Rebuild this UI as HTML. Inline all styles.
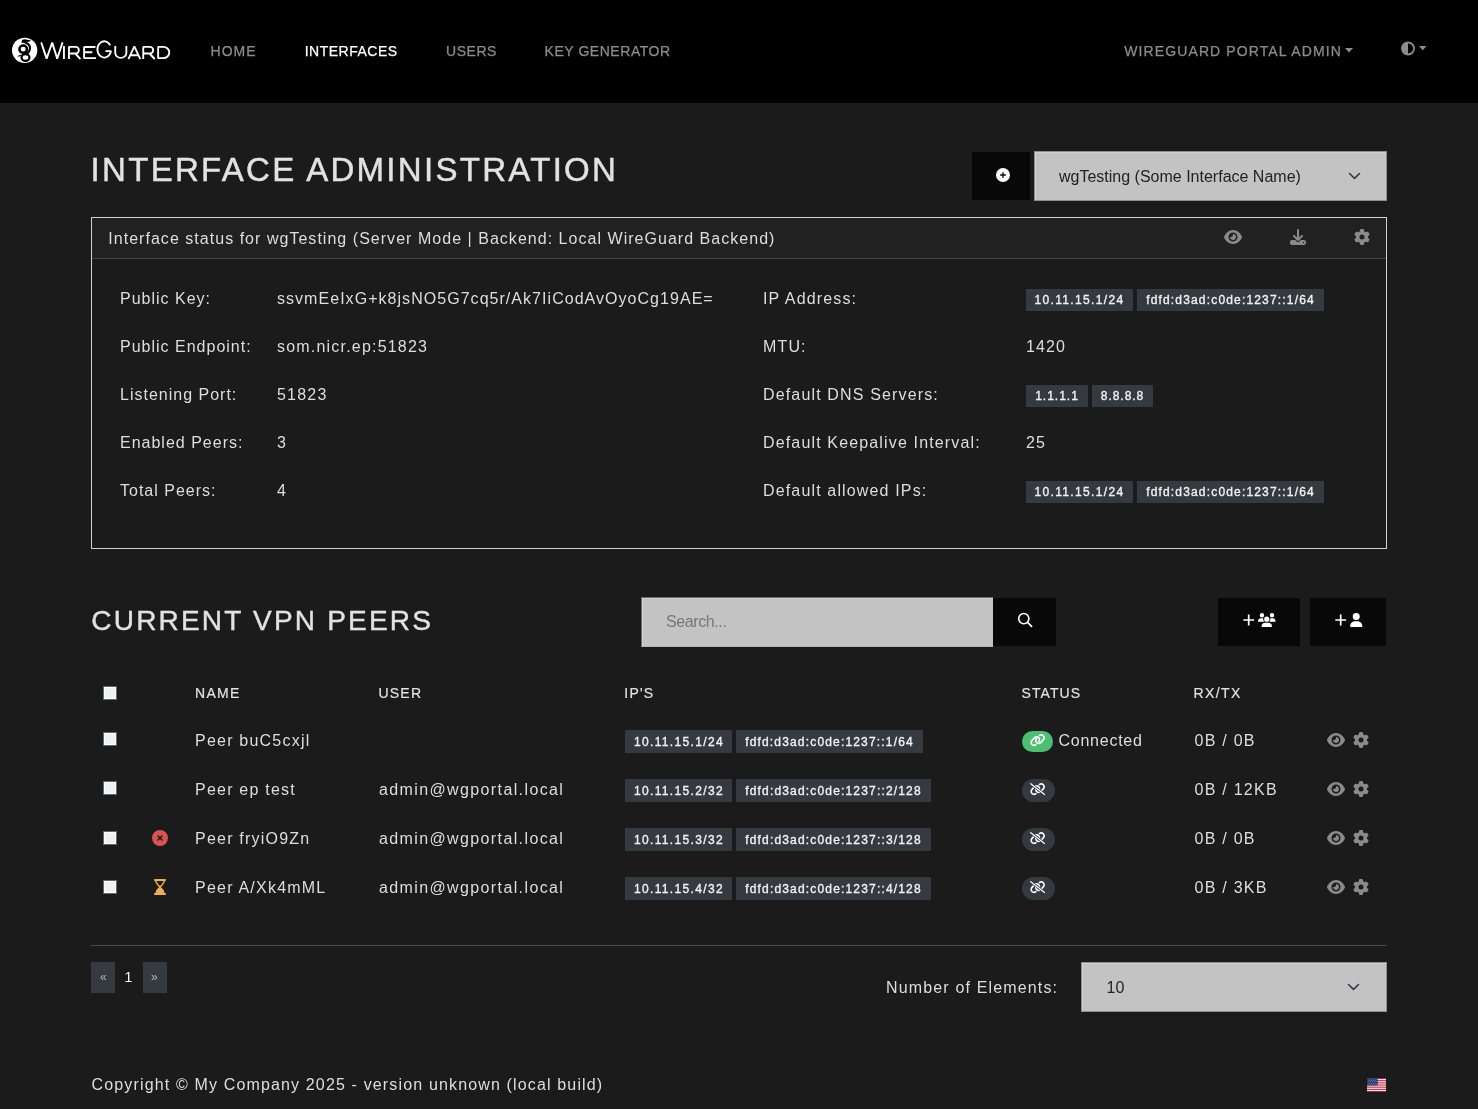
<!DOCTYPE html>
<html><head><meta charset="utf-8"><title>WireGuard Portal</title>
<style>
*{box-sizing:border-box;margin:0;padding:0}
html,body{width:1478px;height:1109px;overflow:hidden}
body{will-change:transform}
body{background:#1b1b1b;color:#dedede;font-family:"Liberation Sans",sans-serif;position:relative}
.t{position:absolute;white-space:nowrap}
.b{position:absolute;display:block}
.bd{position:absolute;background:#343a40;color:#f2f2f2;font-weight:normal;-webkit-text-stroke:0.35px #f2f2f2;text-align:center;white-space:nowrap;font-family:"Liberation Sans",sans-serif}
</style></head><body>
<div class="b" style="left:0px;top:0px;width:1478px;height:103px;background:#000;"></div>
<svg class="b" style="left:0;top:0" width="180" height="80" viewBox="0 0 180 80">
<ellipse cx="24.65" cy="50.35" rx="12.65" ry="12.7" fill="#fff"/>
<ellipse cx="23.2" cy="49.2" rx="3.8" ry="3.6" fill="none" stroke="#000" stroke-width="2.5"/>
<ellipse cx="25.5" cy="57.5" rx="3.95" ry="3.35" fill="none" stroke="#000" stroke-width="2.2"/>
<path d="M25.0 42.2 C28.5 43.6 30.6 46.5 29.9 49.6 C29.4 52.0 28.0 53.2 26.3 54.0" fill="none" stroke="#000" stroke-width="2.1"/>
<path d="M21.3 42.4 L22.2 39.8 L25.2 39.2 L28.0 39.9 L30.9 40.3 L29.6 41.5 L26.8 42.1 L25.4 43.3 Z" fill="#000"/>
<path d="M17.0 56.4 L20.3 54.7 L21.6 55.9 L19.0 56.4 Z" fill="#000"/>
<g fill="none" stroke="#fff" stroke-width="1.85" stroke-linejoin="bevel">
<path d="M41.2 42.4 L46.6 58.6 L52.2 42.6 L57.2 58.6 L62.6 42.4"/>
<path d="M63.95 46.1 V59"/>
<path d="M68.95 59 V46.9 H75.6 A3.25 3.3 0 0 1 75.6 53.5 H68.95 M75.2 53.5 L80.4 59"/>
<path d="M95.4 47.0 H84.1 V58.15 H96 M84.1 52.25 H92.3"/>
<path d="M110.2 45.4 A6.85 8.1 0 1 0 110.95 51.1 H105.4"/>
<path d="M115.25 45.9 V53.4 A5.6 5.1 0 0 0 126.35 53.4 V45.9"/>
<path d="M128.4 59.2 L134.35 46.3 L140.3 59.2 M130.6 55.2 H138.1"/>
<path d="M143.25 59 V46.9 H149.9 A3.25 3.3 0 0 1 149.9 53.5 H143.25 M149.5 53.5 L154.7 59"/>
<path d="M158.15 46.85 H163.2 A6.1 5.65 0 0 1 163.2 58.15 H158.15 Z"/>
</g>
</svg>
<div class="t" style="left:210.6px;top:42.45px;font-size:14px;line-height:18px;letter-spacing:1.0px;color:#8d8d8d;font-weight:400;-webkit-text-stroke:0.25px #8d8d8d">HOME</div>
<div class="t" style="left:304.7px;top:42.45px;font-size:14px;line-height:18px;letter-spacing:0.5px;color:#ffffff;font-weight:400;-webkit-text-stroke:0.25px #ffffff">INTERFACES</div>
<div class="t" style="left:446.1px;top:42.45px;font-size:14px;line-height:18px;letter-spacing:0.5px;color:#8d8d8d;font-weight:400;-webkit-text-stroke:0.25px #8d8d8d">USERS</div>
<div class="t" style="left:544.6px;top:42.45px;font-size:14px;line-height:18px;letter-spacing:0.54px;color:#8d8d8d;font-weight:400;-webkit-text-stroke:0.25px #8d8d8d">KEY GENERATOR</div>
<div class="t" style="left:1124.3px;top:42.45px;font-size:14px;line-height:18px;letter-spacing:1.1px;color:#8d8d8d;font-weight:400;-webkit-text-stroke:0.25px #8d8d8d">WIREGUARD PORTAL ADMIN</div>
<svg class="b" style="left:1345px;top:48px" width="8" height="5" viewBox="0 0 8 5"><path d="M0 0H8L4 4.5Z" fill="#8d8d8d"/></svg>
<svg class="b" style="left:1400px;top:40.5px" width="16" height="15" viewBox="0 0 16 15">
<circle cx="8" cy="7.5" r="6" fill="none" stroke="#8d8d8d" stroke-width="1.8"/>
<path d="M8 1.5 A6 6 0 0 0 8 13.5 Z" fill="#8d8d8d"/></svg>
<svg class="b" style="left:1419px;top:46px" width="8" height="5" viewBox="0 0 8 5"><path d="M0 0H7.5L3.75 4.2Z" fill="#8d8d8d"/></svg>
<div class="t" style="left:90.6px;top:148.57px;font-size:33px;line-height:41px;letter-spacing:2.3px;color:#e2e2e2;font-weight:400;-webkit-text-stroke:0.45px #e2e2e2">INTERFACE ADMINISTRATION</div>
<div class="b" style="left:972px;top:152px;width:58px;height:48px;background:#080808;"></div>
<svg class="b" style="left:996px;top:168px" width="14" height="14" viewBox="0 0 512 512"><path fill="#fff" d="M256 512A256 256 0 1 0 256 0a256 256 0 1 0 0 512zM232 344V280H168c-13.300 0-24-10.7-24-24s10.7-24 24-24h64V168c0-13.3 10.7-24 24-24s24 10.7 24 24v64h64c13.3 0 24 10.7 24 24s-10.7 24-24 24H280v64c0 13.3-10.7 24-24 24s-24-10.7-24-24z"/></svg>
<div class="b" style="left:1034px;top:151px;width:353px;height:50px;background:#c3c3c3;border:1px solid #8e8e8e;box-shadow:inset 1px 1px 0 #d2d2d2"></div>
<div class="t" style="left:1059.0px;top:167.46px;font-size:16px;line-height:20px;letter-spacing:0px;color:#222;font-weight:400;">wgTesting (Some Interface Name)</div>
<svg class="b" style="left:1348px;top:172px" width="13" height="8" viewBox="0 0 13 8"><path d="M1.5 1.5 L6.5 6.3 L11.5 1.5" fill="none" stroke="#343a40" stroke-width="1.6" stroke-linecap="round" stroke-linejoin="round"/></svg>
<div class="b" style="left:91px;top:217px;width:1296px;height:332px;background:transparent;border:1px solid #d2d2d2"></div>
<div class="b" style="left:92px;top:218px;width:1294px;height:41px;background:#212121;border-bottom:1px solid #444"></div>
<div class="t" style="left:108.3px;top:228.66px;font-size:16px;line-height:20px;letter-spacing:1.03px;color:#dedede;font-weight:400;">Interface status for wgTesting (Server Mode | Backend: Local WireGuard Backend)</div>
<svg class="b" style="left:1224px;top:229px" width="18" height="16" viewBox="0 0 576 512"><path fill="#8a8a8a" d="M288 32c-80.8 0-145.5 36.8-192.6 80.6C48.6 156 17.3 208 2.5 243.7c-3.3 7.9-3.3 16.7 0 24.6C17.3 304 48.6 356 95.4 399.4C142.5 443.2 207.2 480 288 480s145.5-36.8 192.6-80.6c46.8-43.5 78.1-95.4 93-131.1c3.3-7.9 3.3-16.7 0-24.6c-14.9-35.7-46.2-87.7-93-131.1C433.5 68.8 368.8 32 288 32zM144 256a144 144 0 1 1 288 0 144 144 0 1 1 -288 0zm144-64c0 35.3-28.7 64-64 64c-7.1 0-13.9-1.2-20.3-3.3c-5.5-1.8-11.9 1.6-11.7 7.4c.3 6.9 1.3 13.8 3.2 20.7c13.7 51.2 66.4 81.6 117.6 67.9s81.6-66.4 67.9-117.6c-11.1-41.5-47.8-69.4-88.6-71.1c-5.8-.2-9.2 6.1-7.4 11.7c2.1 6.4 3.3 13.2 3.3 20.3z"/></svg>
<svg class="b" style="left:1290px;top:229px" width="16" height="16" viewBox="0 0 512 512"><path fill="#8a8a8a" d="M288 32c0-17.7-14.3-32-32-32s-32 14.3-32 32V274.7l-73.4-73.4c-12.5-12.5-32.8-12.5-45.3 0s-12.5 32.8 0 45.3l128 128c12.5 12.5 32.8 12.5 45.3 0l128-128c12.5-12.5 12.5-32.8 0-45.3s-32.8-12.5-45.3 0L288 274.7V32zM64 352c-35.3 0-64 28.7-64 64v32c0 35.3 28.7 64 64 64H448c35.3 0 64-28.7 64-64V416c0-35.3-28.7-64-64-64H346.5l-45.3 45.3c-25 25-65.5 25-90.5 0L165.5 352H64zm368 56a24 24 0 1 1 0 48 24 24 0 1 1 0-48z"/></svg>
<svg class="b" style="left:1354px;top:229px" width="16" height="16" viewBox="0 0 512 512"><path fill="#8a8a8a" d="M495.9 166.6c3.2 8.7 .5 18.4-6.4 24.6l-43.3 39.4c1.1 8.3 1.7 16.8 1.7 25.4s-.6 17.1-1.7 25.4l43.3 39.4c6.9 6.2 9.6 15.9 6.4 24.6c-4.4 11.9-9.7 23.3-15.8 34.3l-4.7 8.1c-6.6 11-14 21.4-22.1 31.2c-5.900 7.2-15.7 9.6-24.5 6.8l-55.7-17.7c-13.4 10.3-28.2 18.9-44 25.4l-12.5 57.1c-2 9.1-9 16.3-18.2 17.8c-13.8 2.3-28 3.5-42.5 3.5s-28.7-1.2-42.5-3.5c-9.2-1.5-16.2-8.7-18.2-17.8l-12.5-57.1c-15.8-6.5-30.6-15.1-44-25.4L83.1 425.9c-8.8 2.8-18.6 .3-24.5-6.8c-8.1-9.8-15.5-20.2-22.1-31.2l-4.7-8.1c-6.1-11-11.4-22.4-15.8-34.3c-3.2-8.7-.5-18.4 6.4-24.6l43.3-39.4C64.6 273.1 64 264.6 64 256s.6-17.1 1.7-25.4L22.4 191.2c-6.9-6.2-9.600-15.9-6.4-24.6c4.4-11.9 9.7-23.3 15.8-34.3l4.7-8.1c6.6-11 14-21.4 22.1-31.2c5.9-7.2 15.7-9.6 24.5-6.8l55.7 17.7c13.4-10.3 28.2-18.9 44-25.4l12.5-57.1c2-9.1 9-16.3 18.2-17.8C227.3 1.2 241.5 0 256 0s28.7 1.2 42.5 3.5c9.2 1.5 16.2 8.7 18.2 17.8l12.5 57.1c15.8 6.5 30.6 15.1 44 25.4l55.7-17.7c8.8-2.8 18.6-.3 24.5 6.8c8.1 9.8 15.5 20.2 22.1 31.2l4.7 8.1c6.1 11 11.4 22.4 15.8 34.3zM256 336a80 80 0 1 0 0-160 80 80 0 1 0 0 160z"/></svg>
<div class="t" style="left:120.0px;top:289.46px;font-size:16px;line-height:20px;letter-spacing:1.0px;color:#dedede;font-weight:400;">Public Key:</div>
<div class="t" style="left:277.0px;top:289.46px;font-size:16px;line-height:20px;letter-spacing:1.04px;color:#dedede;font-weight:400;">ssvmEeIxG+k8jsNO5G7cq5r/Ak7IiCodAvOyoCg19AE=</div>
<div class="t" style="left:120.0px;top:337.46px;font-size:16px;line-height:20px;letter-spacing:1.0px;color:#dedede;font-weight:400;">Public Endpoint:</div>
<div class="t" style="left:277.0px;top:337.46px;font-size:16px;line-height:20px;letter-spacing:1.2px;color:#dedede;font-weight:400;">som.nicr.ep:51823</div>
<div class="t" style="left:120.0px;top:385.46px;font-size:16px;line-height:20px;letter-spacing:1.0px;color:#dedede;font-weight:400;">Listening Port:</div>
<div class="t" style="left:277.0px;top:385.46px;font-size:16px;line-height:20px;letter-spacing:1.2px;color:#dedede;font-weight:400;">51823</div>
<div class="t" style="left:120.0px;top:433.46px;font-size:16px;line-height:20px;letter-spacing:1.0px;color:#dedede;font-weight:400;">Enabled Peers:</div>
<div class="t" style="left:277.0px;top:433.46px;font-size:16px;line-height:20px;letter-spacing:1.2px;color:#dedede;font-weight:400;">3</div>
<div class="t" style="left:120.0px;top:481.46px;font-size:16px;line-height:20px;letter-spacing:1.0px;color:#dedede;font-weight:400;">Total Peers:</div>
<div class="t" style="left:277.0px;top:481.46px;font-size:16px;line-height:20px;letter-spacing:1.2px;color:#dedede;font-weight:400;">4</div>
<div class="t" style="left:763.0px;top:289.46px;font-size:16px;line-height:20px;letter-spacing:1.15px;color:#dedede;font-weight:400;">IP Address:</div>
<div class="t" style="left:763.0px;top:337.46px;font-size:16px;line-height:20px;letter-spacing:1.15px;color:#dedede;font-weight:400;">MTU:</div>
<div class="t" style="left:763.0px;top:385.46px;font-size:16px;line-height:20px;letter-spacing:1.15px;color:#dedede;font-weight:400;">Default DNS Servers:</div>
<div class="t" style="left:763.0px;top:433.46px;font-size:16px;line-height:20px;letter-spacing:1.15px;color:#dedede;font-weight:400;">Default Keepalive Interval:</div>
<div class="t" style="left:763.0px;top:481.46px;font-size:16px;line-height:20px;letter-spacing:1.15px;color:#dedede;font-weight:400;">Default allowed IPs:</div>
<div class="t" style="left:1026.0px;top:337.46px;font-size:16px;line-height:20px;letter-spacing:1.1px;color:#dedede;font-weight:400;">1420</div>
<div class="t" style="left:1026.0px;top:433.46px;font-size:16px;line-height:20px;letter-spacing:1.1px;color:#dedede;font-weight:400;">25</div>
<div class="bd" style="left:1026px;top:289px;width:107px;height:22px;line-height:22px;text-indent:0px;font-size:12px;letter-spacing:1.35px">10.11.15.1/24</div>
<div class="bd" style="left:1137px;top:289px;width:187px;height:22px;line-height:22px;text-indent:0px;font-size:12px;letter-spacing:1.17px">fdfd:d3ad:c0de:1237::1/64</div>
<div class="bd" style="left:1026px;top:481px;width:107px;height:22px;line-height:22px;text-indent:0px;font-size:12px;letter-spacing:1.35px">10.11.15.1/24</div>
<div class="bd" style="left:1137px;top:481px;width:187px;height:22px;line-height:22px;text-indent:0px;font-size:12px;letter-spacing:1.17px">fdfd:d3ad:c0de:1237::1/64</div>
<div class="bd" style="left:1026px;top:385px;width:62px;height:22px;line-height:22px;text-indent:0px;font-size:12px;letter-spacing:1.0px">1.1.1.1</div>
<div class="bd" style="left:1092px;top:385px;width:61px;height:22px;line-height:22px;text-indent:0px;font-size:12px;letter-spacing:0.95px">8.8.8.8</div>
<div class="t" style="left:91.3px;top:603.30px;font-size:28px;line-height:35px;letter-spacing:2.2px;color:#e2e2e2;font-weight:400;-webkit-text-stroke:0.4px #e2e2e2">CURRENT VPN PEERS</div>
<div class="b" style="left:641px;top:597px;width:352px;height:50px;background:#c3c3c3;border:1px solid #6a6a6a;border-right:none;border-bottom-color:#b5b5b5;box-shadow:inset 1px 1px 0 #d2d2d2"></div>
<div class="t" style="left:666.0px;top:612.46px;font-size:16px;line-height:20px;letter-spacing:-0.4px;color:#777;font-weight:400;">Search...</div>
<div class="b" style="left:993px;top:598px;width:63px;height:48px;background:#080808;"></div>
<svg class="b" style="left:1016px;top:611px" width="18" height="18" viewBox="0 0 18 18"><circle cx="7.8" cy="7.6" r="5.1" fill="none" stroke="#fff" stroke-width="1.6"/><path d="M11.6 11.4 L15.6 15.4" stroke="#fff" stroke-width="1.7" stroke-linecap="round"/></svg>
<div class="b" style="left:1218px;top:598px;width:82px;height:48px;background:#080808;"></div>
<div class="b" style="left:1310px;top:598px;width:76px;height:48px;background:#080808;"></div>
<svg class="b" style="left:1242.5px;top:614px" width="12" height="12" viewBox="0 0 12 12"><path d="M5.7 0.5V11.5M0.3 6H11.1" stroke="#fff" stroke-width="1.7"/></svg>
<svg class="b" style="left:1334.5px;top:614px" width="12" height="12" viewBox="0 0 12 12"><path d="M5.7 0.5V11.5M0.3 6H11.1" stroke="#fff" stroke-width="1.7"/></svg>
<svg class="b" style="left:1258px;top:613px" width="17.5" height="14" viewBox="0 0 640 512"><path fill="#fff" d="M144 0a80 80 0 1 1 0 160A80 80 0 1 1 144 0zM512 0a80 80 0 1 1 0 160A80 80 0 1 1 512 0zM0 298.7C0 239.8 47.8 192 106.7 192h42.7c15.9 0 31 3.5 44.6 9.7c-1.3 7.2-1.9 14.7-1.9 22.3c0 38.2 16.8 72.5 43.3 96c-.2 0-.4 0-.7 0H21.3C9.6 320 0 310.4 0 298.7zM405.3 320c-.2 0-.4 0-.7 0c26.6-23.5 43.3-57.8 43.3-96c0-7.6-.7-15-1.9-22.3c13.6-6.3 28.7-9.7 44.6-9.7h42.7C592 192 640 239.8 640 298.7c0 11.8-9.6 21.3-21.3 21.3H405.3zM224 224a96 96 0 1 1 192 0 96 96 0 1 1 -192 0zM128 485.3C128 411.7 187.7 352 261.3 352H378.7C452.3 352 512 411.7 512 485.3c0 14.7-11.9 26.7-26.7 26.7H154.7c-14.7 0-26.7-11.9-26.7-26.7z"/></svg>
<svg class="b" style="left:1350px;top:613px" width="12.5" height="14" viewBox="0 0 448 512"><path fill="#fff" d="M224 256A128 128 0 1 0 224 0a128 128 0 1 0 0 256zm-45.7 48C79.8 304 0 383.8 0 482.3C0 498.7 13.3 512 29.7 512H418.3c16.4 0 29.7-13.3 29.7-29.7C448 383.8 368.2 304 269.7 304H178.3z"/></svg>
<div class="b" style="left:103px;top:686px;width:14px;height:14px;background:#eff0f2;border:1px solid #5f666c;box-shadow:inset 0 0 0 1px #fbfcfe"></div>
<div class="t" style="left:195.0px;top:684.45px;font-size:14px;line-height:18px;letter-spacing:1.33px;color:#e2e2e2;font-weight:400;-webkit-text-stroke:0.2px #e2e2e2">NAME</div>
<div class="t" style="left:378.5px;top:684.45px;font-size:14px;line-height:18px;letter-spacing:1.2px;color:#e2e2e2;font-weight:400;-webkit-text-stroke:0.2px #e2e2e2">USER</div>
<div class="t" style="left:624.3px;top:684.45px;font-size:14px;line-height:18px;letter-spacing:1.2px;color:#e2e2e2;font-weight:400;-webkit-text-stroke:0.2px #e2e2e2">IP'S</div>
<div class="t" style="left:1021.6px;top:684.45px;font-size:14px;line-height:18px;letter-spacing:1.08px;color:#e2e2e2;font-weight:400;-webkit-text-stroke:0.2px #e2e2e2">STATUS</div>
<div class="t" style="left:1193.4px;top:684.45px;font-size:14px;line-height:18px;letter-spacing:1.4px;color:#e2e2e2;font-weight:400;-webkit-text-stroke:0.2px #e2e2e2">RX/TX</div>
<div class="b" style="left:103px;top:732px;width:14px;height:14px;background:#eff0f2;border:1px solid #5f666c;box-shadow:inset 0 0 0 1px #fbfcfe"></div>
<div class="t" style="left:195.0px;top:731.46px;font-size:16px;line-height:20px;letter-spacing:1.22px;color:#dedede;font-weight:400;">Peer buC5cxjl</div>
<div class="bd" style="left:625px;top:730px;width:107px;height:23px;line-height:25px;text-indent:1px;font-size:12px;letter-spacing:1.35px">10.11.15.1/24</div>
<div class="bd" style="left:736px;top:730px;width:187px;height:23px;line-height:25px;text-indent:0px;font-size:12px;letter-spacing:1.17px">fdfd:d3ad:c0de:1237::1/64</div>
<div class="b" style="left:1022px;top:731px;width:31px;height:21px;border-radius:11px;background:#4cbf73"></div>
<svg class="b" style="left:1029.8px;top:734.3px" width="15.3" height="12.25" viewBox="0 0 640 512"><path fill="#fff" d="M579.8 267.7c60.1-60.1 60.1-157.5 0-217.6-53.6-53.6-138.1-60.6-199.7-16.5l-1.7 1.1c-15.4 11-19 32.4-8 47.7s32.4 19 47.7 8l1.6-1.1c34.4-24.5 81.4-20.7 111.1 9.2 33.7 33.7 33.7 88.3 0 122L424.7 332.9c-33.7 33.7-88.3 33.7-122 0-29.9-29.9-33.7-76.9-9.2-111.2l1.1-1.6c11-15.4 7.5-36.8-8-47.8s-36.8-7.5-47.7 8l-1.1 1.6C194.5 243.5 201.5 328 255.1 381.6c60.1 60.1 157.5 60.1 217.6 0L579.8 267.7zM60.2 244.3c-60.1 60.1-60.1 157.5 0 217.6 53.6 53.6 138.1 60.6 199.7 16.5l1.6-1.1c15.4-11 19-32.4 8-47.7s-32.4-19-47.7-8l-1.6 1.1c-34.4 24.5-81.4 20.7-111.1-9.2C75.3 378.5 75.3 323.8 109 290.2L215.3 179.1c33.7-33.7 88.3-33.7 122 0 29.9 29.9 33.7 76.9 9.2 111.2l-1.1 1.6c-11 15.4-7.5 36.8 8 47.7s36.8 7.5 47.7-8l1.1-1.6C445.5 268.5 438.5 184 384.9 130.4c-60.1-60.1-157.5-60.1-217.6 0L60.2 244.3z"/></svg>
<div class="t" style="left:1058.5px;top:731.46px;font-size:16px;line-height:20px;letter-spacing:0.75px;color:#dedede;font-weight:400;">Connected</div>
<div class="t" style="left:1194.5px;top:731.46px;font-size:16px;line-height:20px;letter-spacing:1.25px;color:#dedede;font-weight:400;">0B / 0B</div>
<svg class="b" style="left:1327px;top:732px" width="18" height="16" viewBox="0 0 576 512"><path fill="#8a8a8a" d="M288 32c-80.8 0-145.5 36.8-192.6 80.6C48.6 156 17.3 208 2.5 243.7c-3.3 7.9-3.3 16.7 0 24.6C17.3 304 48.6 356 95.4 399.4C142.5 443.2 207.2 480 288 480s145.5-36.8 192.6-80.6c46.8-43.5 78.1-95.4 93-131.1c3.3-7.9 3.3-16.7 0-24.6c-14.9-35.7-46.2-87.7-93-131.1C433.5 68.8 368.8 32 288 32zM144 256a144 144 0 1 1 288 0 144 144 0 1 1 -288 0zm144-64c0 35.3-28.7 64-64 64c-7.1 0-13.9-1.2-20.3-3.3c-5.5-1.8-11.9 1.6-11.7 7.4c.3 6.9 1.3 13.8 3.2 20.7c13.7 51.2 66.4 81.6 117.6 67.9s81.6-66.4 67.9-117.6c-11.1-41.5-47.8-69.4-88.6-71.1c-5.8-.2-9.2 6.1-7.4 11.7c2.1 6.4 3.3 13.2 3.3 20.3z"/></svg>
<svg class="b" style="left:1353px;top:732px" width="16" height="16" viewBox="0 0 512 512"><path fill="#8a8a8a" d="M495.9 166.6c3.2 8.7 .5 18.4-6.4 24.6l-43.3 39.4c1.1 8.3 1.7 16.8 1.7 25.4s-.6 17.1-1.7 25.4l43.3 39.4c6.9 6.2 9.6 15.9 6.4 24.6c-4.4 11.9-9.7 23.3-15.8 34.3l-4.7 8.1c-6.6 11-14 21.4-22.1 31.2c-5.900 7.2-15.7 9.6-24.5 6.8l-55.7-17.7c-13.4 10.3-28.2 18.9-44 25.4l-12.5 57.1c-2 9.1-9 16.3-18.2 17.8c-13.8 2.3-28 3.5-42.5 3.5s-28.7-1.2-42.5-3.5c-9.2-1.5-16.2-8.7-18.2-17.8l-12.5-57.1c-15.8-6.5-30.6-15.1-44-25.4L83.1 425.9c-8.8 2.8-18.6 .3-24.5-6.8c-8.1-9.8-15.5-20.2-22.1-31.2l-4.7-8.1c-6.1-11-11.4-22.4-15.8-34.3c-3.2-8.7-.5-18.4 6.4-24.6l43.3-39.4C64.6 273.1 64 264.6 64 256s.6-17.1 1.7-25.4L22.4 191.2c-6.9-6.2-9.600-15.9-6.4-24.6c4.4-11.9 9.7-23.3 15.8-34.3l4.7-8.1c6.6-11 14-21.4 22.1-31.2c5.9-7.2 15.7-9.6 24.5-6.8l55.7 17.7c13.4-10.3 28.2-18.9 44-25.4l12.5-57.1c2-9.1 9-16.3 18.2-17.8C227.3 1.2 241.5 0 256 0s28.7 1.2 42.5 3.5c9.2 1.5 16.2 8.7 18.2 17.8l12.5 57.1c15.8 6.5 30.6 15.1 44 25.4l55.7-17.7c8.8-2.8 18.6-.3 24.5 6.8c8.1 9.8 15.5 20.2 22.1 31.2l4.7 8.1c6.1 11 11.4 22.4 15.8 34.3zM256 336a80 80 0 1 0 0-160 80 80 0 1 0 0 160z"/></svg>
<div class="b" style="left:103px;top:781px;width:14px;height:14px;background:#eff0f2;border:1px solid #5f666c;box-shadow:inset 0 0 0 1px #fbfcfe"></div>
<div class="t" style="left:195.0px;top:780.46px;font-size:16px;line-height:20px;letter-spacing:1.22px;color:#dedede;font-weight:400;">Peer ep test</div>
<div class="t" style="left:379.0px;top:780.46px;font-size:16px;line-height:20px;letter-spacing:1.38px;color:#dedede;font-weight:400;">admin@wgportal.local</div>
<div class="bd" style="left:625px;top:779px;width:107px;height:23px;line-height:25px;text-indent:1px;font-size:12px;letter-spacing:1.35px">10.11.15.2/32</div>
<div class="bd" style="left:736px;top:779px;width:195px;height:23px;line-height:25px;text-indent:0px;font-size:12px;letter-spacing:1.17px">fdfd:d3ad:c0de:1237::2/128</div>
<div class="b" style="left:1022px;top:779px;width:33px;height:23px;border-radius:12px;background:#343a40"></div>
<svg class="b" style="left:1030.2px;top:783.4px" width="15.3" height="12.25" viewBox="0 0 640 512"><path fill="#fff" d="M579.8 267.7c60.1-60.1 60.1-157.5 0-217.6-53.6-53.6-138.1-60.6-199.7-16.5l-1.7 1.1c-15.4 11-19 32.4-8 47.7s32.4 19 47.7 8l1.6-1.1c34.4-24.5 81.4-20.7 111.1 9.2 33.7 33.7 33.7 88.3 0 122L424.7 332.9c-33.7 33.7-88.3 33.7-122 0-29.9-29.9-33.7-76.9-9.2-111.2l1.1-1.6c11-15.4 7.5-36.8-8-47.8s-36.8-7.5-47.7 8l-1.1 1.6C194.5 243.5 201.5 328 255.1 381.6c60.1 60.1 157.5 60.1 217.6 0L579.8 267.7zM60.2 244.3c-60.1 60.1-60.1 157.5 0 217.6 53.6 53.6 138.1 60.6 199.7 16.5l1.6-1.1c15.4-11 19-32.4 8-47.7s-32.4-19-47.7-8l-1.6 1.1c-34.4 24.5-81.4 20.7-111.1-9.2C75.3 378.5 75.3 323.8 109 290.2L215.3 179.1c33.7-33.7 88.3-33.7 122 0 29.9 29.9 33.7 76.9 9.2 111.2l-1.1 1.6c-11 15.4-7.5 36.8 8 47.7s36.8 7.5 47.7-8l1.1-1.6C445.5 268.5 438.5 184 384.9 130.4c-60.1-60.1-157.5-60.1-217.6 0L60.2 244.3z"/><path d="M20 20 L620 492" stroke="#343a40" stroke-width="110"/><path d="M30 28 L610 484" stroke="#fff" stroke-width="50" stroke-linecap="round"/></svg>
<div class="t" style="left:1194.5px;top:780.46px;font-size:16px;line-height:20px;letter-spacing:1.25px;color:#dedede;font-weight:400;">0B / 12KB</div>
<svg class="b" style="left:1327px;top:781px" width="18" height="16" viewBox="0 0 576 512"><path fill="#8a8a8a" d="M288 32c-80.8 0-145.5 36.8-192.6 80.6C48.6 156 17.3 208 2.5 243.7c-3.3 7.9-3.3 16.7 0 24.6C17.3 304 48.6 356 95.4 399.4C142.5 443.2 207.2 480 288 480s145.5-36.8 192.6-80.6c46.8-43.5 78.1-95.4 93-131.1c3.3-7.9 3.3-16.7 0-24.6c-14.9-35.7-46.2-87.7-93-131.1C433.5 68.8 368.8 32 288 32zM144 256a144 144 0 1 1 288 0 144 144 0 1 1 -288 0zm144-64c0 35.3-28.7 64-64 64c-7.1 0-13.9-1.2-20.3-3.3c-5.5-1.8-11.9 1.6-11.7 7.4c.3 6.9 1.3 13.8 3.2 20.7c13.7 51.2 66.4 81.6 117.6 67.9s81.6-66.4 67.9-117.6c-11.1-41.5-47.8-69.4-88.6-71.1c-5.8-.2-9.2 6.1-7.4 11.7c2.1 6.4 3.3 13.2 3.3 20.3z"/></svg>
<svg class="b" style="left:1353px;top:781px" width="16" height="16" viewBox="0 0 512 512"><path fill="#8a8a8a" d="M495.9 166.6c3.2 8.7 .5 18.4-6.4 24.6l-43.3 39.4c1.1 8.3 1.7 16.8 1.7 25.4s-.6 17.1-1.7 25.4l43.3 39.4c6.9 6.2 9.6 15.9 6.4 24.6c-4.4 11.9-9.7 23.3-15.8 34.3l-4.7 8.1c-6.6 11-14 21.4-22.1 31.2c-5.900 7.2-15.7 9.6-24.5 6.8l-55.7-17.7c-13.4 10.3-28.2 18.9-44 25.4l-12.5 57.1c-2 9.1-9 16.3-18.2 17.8c-13.8 2.3-28 3.5-42.5 3.5s-28.7-1.2-42.5-3.5c-9.2-1.5-16.2-8.7-18.2-17.8l-12.5-57.1c-15.8-6.5-30.6-15.1-44-25.4L83.1 425.9c-8.8 2.8-18.6 .3-24.5-6.8c-8.1-9.8-15.5-20.2-22.1-31.2l-4.7-8.1c-6.1-11-11.4-22.4-15.8-34.3c-3.2-8.7-.5-18.4 6.4-24.6l43.3-39.4C64.6 273.1 64 264.6 64 256s.6-17.1 1.7-25.4L22.4 191.2c-6.9-6.2-9.600-15.9-6.4-24.6c4.4-11.9 9.7-23.3 15.8-34.3l4.7-8.1c6.6-11 14-21.4 22.1-31.2c5.9-7.2 15.7-9.6 24.5-6.8l55.7 17.7c13.4-10.3 28.2-18.9 44-25.4l12.5-57.1c2-9.1 9-16.3 18.2-17.8C227.3 1.2 241.5 0 256 0s28.7 1.2 42.5 3.5c9.2 1.5 16.2 8.7 18.2 17.8l12.5 57.1c15.8 6.5 30.6 15.1 44 25.4l55.7-17.7c8.8-2.8 18.6-.3 24.5 6.8c8.1 9.8 15.5 20.2 22.1 31.2l4.7 8.1c6.1 11 11.4 22.4 15.8 34.3zM256 336a80 80 0 1 0 0-160 80 80 0 1 0 0 160z"/></svg>
<div class="b" style="left:103px;top:831px;width:14px;height:14px;background:#eff0f2;border:1px solid #5f666c;box-shadow:inset 0 0 0 1px #fbfcfe"></div>
<svg class="b" style="left:152px;top:830px" width="16" height="16" viewBox="0 0 512 512"><path fill="#d9534f" fill-rule="evenodd" d="M256 512A256 256 0 1 0 256 0a256 256 0 1 0 0 512zM175 175c9.4-9.4 24.6-9.4 33.9 0l47 47 47-47c9.4-9.4 24.6-9.4 33.9 0s9.4 24.6 0 33.9l-47 47 47 47c9.4 9.4 9.4 24.6 0 33.9s-24.6 9.4-33.9 0l-47-47-47 47c-9.4 9.4-24.6 9.4-33.9 0s-9.4-24.6 0-33.9l47-47-47-47c-9.4-9.4-9.4-24.6 0-33.9z"/></svg>
<div class="t" style="left:195.0px;top:829.46px;font-size:16px;line-height:20px;letter-spacing:1.22px;color:#dedede;font-weight:400;">Peer fryiO9Zn</div>
<div class="t" style="left:379.0px;top:829.46px;font-size:16px;line-height:20px;letter-spacing:1.38px;color:#dedede;font-weight:400;">admin@wgportal.local</div>
<div class="bd" style="left:625px;top:828px;width:107px;height:23px;line-height:25px;text-indent:1px;font-size:12px;letter-spacing:1.35px">10.11.15.3/32</div>
<div class="bd" style="left:736px;top:828px;width:195px;height:23px;line-height:25px;text-indent:0px;font-size:12px;letter-spacing:1.17px">fdfd:d3ad:c0de:1237::3/128</div>
<div class="b" style="left:1022px;top:828px;width:33px;height:23px;border-radius:12px;background:#343a40"></div>
<svg class="b" style="left:1030.2px;top:832.4px" width="15.3" height="12.25" viewBox="0 0 640 512"><path fill="#fff" d="M579.8 267.7c60.1-60.1 60.1-157.5 0-217.6-53.6-53.6-138.1-60.6-199.7-16.5l-1.7 1.1c-15.4 11-19 32.4-8 47.7s32.4 19 47.7 8l1.6-1.1c34.4-24.5 81.4-20.7 111.1 9.2 33.7 33.7 33.7 88.3 0 122L424.7 332.9c-33.7 33.7-88.3 33.7-122 0-29.9-29.9-33.7-76.9-9.2-111.2l1.1-1.6c11-15.4 7.5-36.8-8-47.8s-36.8-7.5-47.7 8l-1.1 1.6C194.5 243.5 201.5 328 255.1 381.6c60.1 60.1 157.5 60.1 217.6 0L579.8 267.7zM60.2 244.3c-60.1 60.1-60.1 157.5 0 217.6 53.6 53.6 138.1 60.6 199.7 16.5l1.6-1.1c15.4-11 19-32.4 8-47.7s-32.4-19-47.7-8l-1.6 1.1c-34.4 24.5-81.4 20.7-111.1-9.2C75.3 378.5 75.3 323.8 109 290.2L215.3 179.1c33.7-33.7 88.3-33.7 122 0 29.9 29.9 33.7 76.9 9.2 111.2l-1.1 1.6c-11 15.4-7.5 36.8 8 47.7s36.8 7.5 47.7-8l1.1-1.6C445.5 268.5 438.5 184 384.9 130.4c-60.1-60.1-157.5-60.1-217.6 0L60.2 244.3z"/><path d="M20 20 L620 492" stroke="#343a40" stroke-width="110"/><path d="M30 28 L610 484" stroke="#fff" stroke-width="50" stroke-linecap="round"/></svg>
<div class="t" style="left:1194.5px;top:829.46px;font-size:16px;line-height:20px;letter-spacing:1.25px;color:#dedede;font-weight:400;">0B / 0B</div>
<svg class="b" style="left:1327px;top:830px" width="18" height="16" viewBox="0 0 576 512"><path fill="#8a8a8a" d="M288 32c-80.8 0-145.5 36.8-192.6 80.6C48.6 156 17.3 208 2.5 243.7c-3.3 7.9-3.3 16.7 0 24.6C17.3 304 48.6 356 95.4 399.4C142.5 443.2 207.2 480 288 480s145.5-36.8 192.6-80.6c46.8-43.5 78.1-95.4 93-131.1c3.3-7.9 3.3-16.7 0-24.6c-14.9-35.7-46.2-87.7-93-131.1C433.5 68.8 368.8 32 288 32zM144 256a144 144 0 1 1 288 0 144 144 0 1 1 -288 0zm144-64c0 35.3-28.7 64-64 64c-7.1 0-13.9-1.2-20.3-3.3c-5.5-1.8-11.9 1.6-11.7 7.4c.3 6.9 1.3 13.8 3.2 20.7c13.7 51.2 66.4 81.6 117.6 67.9s81.6-66.4 67.9-117.6c-11.1-41.5-47.8-69.4-88.6-71.1c-5.8-.2-9.2 6.1-7.4 11.7c2.1 6.4 3.3 13.2 3.3 20.3z"/></svg>
<svg class="b" style="left:1353px;top:830px" width="16" height="16" viewBox="0 0 512 512"><path fill="#8a8a8a" d="M495.9 166.6c3.2 8.7 .5 18.4-6.4 24.6l-43.3 39.4c1.1 8.3 1.7 16.8 1.7 25.4s-.6 17.1-1.7 25.4l43.3 39.4c6.9 6.2 9.6 15.9 6.4 24.6c-4.4 11.9-9.7 23.3-15.8 34.3l-4.7 8.1c-6.6 11-14 21.4-22.1 31.2c-5.900 7.2-15.7 9.6-24.5 6.8l-55.7-17.7c-13.4 10.3-28.2 18.9-44 25.4l-12.5 57.1c-2 9.1-9 16.3-18.2 17.8c-13.8 2.3-28 3.5-42.5 3.5s-28.7-1.2-42.5-3.5c-9.2-1.5-16.2-8.7-18.2-17.8l-12.5-57.1c-15.8-6.5-30.6-15.1-44-25.4L83.1 425.9c-8.8 2.8-18.6 .3-24.5-6.8c-8.1-9.8-15.5-20.2-22.1-31.2l-4.7-8.1c-6.1-11-11.4-22.4-15.8-34.3c-3.2-8.7-.5-18.4 6.4-24.6l43.3-39.4C64.6 273.1 64 264.6 64 256s.6-17.1 1.7-25.4L22.4 191.2c-6.9-6.2-9.600-15.9-6.4-24.6c4.4-11.9 9.7-23.3 15.8-34.3l4.7-8.1c6.6-11 14-21.4 22.1-31.2c5.9-7.2 15.7-9.6 24.5-6.8l55.7 17.7c13.4-10.3 28.2-18.9 44-25.4l12.5-57.1c2-9.1 9-16.3 18.2-17.8C227.3 1.2 241.5 0 256 0s28.7 1.2 42.5 3.5c9.2 1.5 16.2 8.7 18.2 17.8l12.5 57.1c15.8 6.5 30.6 15.1 44 25.4l55.7-17.7c8.8-2.8 18.6-.3 24.5 6.8c8.1 9.8 15.5 20.2 22.1 31.2l4.7 8.1c6.1 11 11.4 22.4 15.8 34.3zM256 336a80 80 0 1 0 0-160 80 80 0 1 0 0 160z"/></svg>
<div class="b" style="left:103px;top:880px;width:14px;height:14px;background:#eff0f2;border:1px solid #5f666c;box-shadow:inset 0 0 0 1px #fbfcfe"></div>
<svg class="b" style="left:154px;top:879px" width="12" height="16" viewBox="0 0 12 16"><g fill="#f0ad4e"><rect x="0" y="0" width="12" height="2" rx="0.8"/><rect x="0" y="14" width="12" height="2" rx="0.8"/><path d="M5.3 8 C3.5 9.6 1.6 11.2 1.6 14 H10.4 C10.4 11.2 8.5 9.6 6.7 8 Z"/></g><path d="M1.9 1.6 C1.9 4.6 4.0 6.3 6 8 C8.0 6.3 10.1 4.6 10.1 1.6" fill="none" stroke="#f0ad4e" stroke-width="1.5"/></svg>
<div class="t" style="left:195.0px;top:878.46px;font-size:16px;line-height:20px;letter-spacing:1.22px;color:#dedede;font-weight:400;">Peer A/Xk4mML</div>
<div class="t" style="left:379.0px;top:878.46px;font-size:16px;line-height:20px;letter-spacing:1.38px;color:#dedede;font-weight:400;">admin@wgportal.local</div>
<div class="bd" style="left:625px;top:877px;width:107px;height:23px;line-height:25px;text-indent:1px;font-size:12px;letter-spacing:1.35px">10.11.15.4/32</div>
<div class="bd" style="left:736px;top:877px;width:195px;height:23px;line-height:25px;text-indent:0px;font-size:12px;letter-spacing:1.17px">fdfd:d3ad:c0de:1237::4/128</div>
<div class="b" style="left:1022px;top:877px;width:33px;height:23px;border-radius:12px;background:#343a40"></div>
<svg class="b" style="left:1030.2px;top:881.4px" width="15.3" height="12.25" viewBox="0 0 640 512"><path fill="#fff" d="M579.8 267.7c60.1-60.1 60.1-157.5 0-217.6-53.6-53.6-138.1-60.6-199.7-16.5l-1.7 1.1c-15.4 11-19 32.4-8 47.7s32.4 19 47.7 8l1.6-1.1c34.4-24.5 81.4-20.7 111.1 9.2 33.7 33.7 33.7 88.3 0 122L424.7 332.9c-33.7 33.7-88.3 33.7-122 0-29.9-29.9-33.7-76.9-9.2-111.2l1.1-1.6c11-15.4 7.5-36.8-8-47.8s-36.8-7.5-47.7 8l-1.1 1.6C194.5 243.5 201.5 328 255.1 381.6c60.1 60.1 157.5 60.1 217.6 0L579.8 267.7zM60.2 244.3c-60.1 60.1-60.1 157.5 0 217.6 53.6 53.6 138.1 60.6 199.7 16.5l1.6-1.1c15.4-11 19-32.4 8-47.7s-32.4-19-47.7-8l-1.6 1.1c-34.4 24.5-81.4 20.7-111.1-9.2C75.3 378.5 75.3 323.8 109 290.2L215.3 179.1c33.7-33.7 88.3-33.7 122 0 29.9 29.9 33.7 76.9 9.2 111.2l-1.1 1.6c-11 15.4-7.5 36.8 8 47.7s36.8 7.5 47.7-8l1.1-1.6C445.5 268.5 438.5 184 384.9 130.4c-60.1-60.1-157.5-60.1-217.6 0L60.2 244.3z"/><path d="M20 20 L620 492" stroke="#343a40" stroke-width="110"/><path d="M30 28 L610 484" stroke="#fff" stroke-width="50" stroke-linecap="round"/></svg>
<div class="t" style="left:1194.5px;top:878.46px;font-size:16px;line-height:20px;letter-spacing:1.25px;color:#dedede;font-weight:400;">0B / 3KB</div>
<svg class="b" style="left:1327px;top:879px" width="18" height="16" viewBox="0 0 576 512"><path fill="#8a8a8a" d="M288 32c-80.8 0-145.5 36.8-192.6 80.6C48.6 156 17.3 208 2.5 243.7c-3.3 7.9-3.3 16.7 0 24.6C17.3 304 48.6 356 95.4 399.4C142.5 443.2 207.2 480 288 480s145.5-36.8 192.6-80.6c46.8-43.5 78.1-95.4 93-131.1c3.3-7.9 3.3-16.7 0-24.6c-14.9-35.7-46.2-87.7-93-131.1C433.5 68.8 368.8 32 288 32zM144 256a144 144 0 1 1 288 0 144 144 0 1 1 -288 0zm144-64c0 35.3-28.7 64-64 64c-7.1 0-13.9-1.2-20.3-3.3c-5.5-1.8-11.9 1.6-11.7 7.4c.3 6.9 1.3 13.8 3.2 20.7c13.7 51.2 66.4 81.6 117.6 67.9s81.6-66.4 67.9-117.6c-11.1-41.5-47.8-69.4-88.6-71.1c-5.8-.2-9.2 6.1-7.4 11.7c2.1 6.4 3.3 13.2 3.3 20.3z"/></svg>
<svg class="b" style="left:1353px;top:879px" width="16" height="16" viewBox="0 0 512 512"><path fill="#8a8a8a" d="M495.9 166.6c3.2 8.7 .5 18.4-6.4 24.6l-43.3 39.4c1.1 8.3 1.7 16.8 1.7 25.4s-.6 17.1-1.7 25.4l43.3 39.4c6.9 6.2 9.6 15.9 6.4 24.6c-4.4 11.9-9.7 23.3-15.8 34.3l-4.7 8.1c-6.6 11-14 21.4-22.1 31.2c-5.900 7.2-15.7 9.6-24.5 6.8l-55.7-17.7c-13.4 10.3-28.2 18.9-44 25.4l-12.5 57.1c-2 9.1-9 16.3-18.2 17.8c-13.8 2.3-28 3.5-42.5 3.5s-28.7-1.2-42.5-3.5c-9.2-1.5-16.2-8.7-18.2-17.8l-12.5-57.1c-15.8-6.5-30.6-15.1-44-25.4L83.1 425.9c-8.8 2.8-18.6 .3-24.5-6.8c-8.1-9.8-15.5-20.2-22.1-31.2l-4.7-8.1c-6.1-11-11.4-22.4-15.8-34.3c-3.2-8.7-.5-18.4 6.4-24.6l43.3-39.4C64.6 273.1 64 264.6 64 256s.6-17.1 1.7-25.4L22.4 191.2c-6.9-6.2-9.600-15.9-6.4-24.6c4.4-11.9 9.7-23.3 15.8-34.3l4.7-8.1c6.6-11 14-21.4 22.1-31.2c5.9-7.2 15.7-9.6 24.5-6.8l55.7 17.7c13.4-10.3 28.2-18.9 44-25.4l12.5-57.1c2-9.1 9-16.3 18.2-17.8C227.3 1.2 241.5 0 256 0s28.7 1.2 42.5 3.5c9.2 1.5 16.2 8.7 18.2 17.8l12.5 57.1c15.8 6.5 30.6 15.1 44 25.4l55.7-17.7c8.8-2.8 18.6-.3 24.5 6.8c8.1 9.8 15.5 20.2 22.1 31.2l4.7 8.1c6.1 11 11.4 22.4 15.8 34.3zM256 336a80 80 0 1 0 0-160 80 80 0 1 0 0 160z"/></svg>
<div class="b" style="left:91px;top:945px;width:1296px;height:1px;background:#4a4a4a;"></div>
<div class="b" style="left:91px;top:962px;width:24px;height:31px;background:#343a40;"></div>
<div class="b" style="left:143px;top:962px;width:24px;height:31px;background:#343a40;"></div>
<div class="t" style="left:100.0px;top:969.84px;font-size:12px;line-height:15px;letter-spacing:0px;color:#adb5bd;font-weight:400;">&laquo;</div>
<div class="t" style="left:151.0px;top:969.84px;font-size:12px;line-height:15px;letter-spacing:0px;color:#adb5bd;font-weight:400;">&raquo;</div>
<div class="t" style="left:124.5px;top:968.45px;font-size:14px;line-height:18px;letter-spacing:0px;color:#fff;font-weight:400;">1</div>
<div class="t" style="left:886.0px;top:977.76px;font-size:16px;line-height:20px;letter-spacing:1.15px;color:#dedede;font-weight:400;">Number of Elements:</div>
<div class="b" style="left:1081px;top:962px;width:306px;height:50px;background:#c3c3c3;border:1px solid #8e8e8e;box-shadow:inset 1px 1px 0 #d2d2d2"></div>
<div class="t" style="left:1106.5px;top:977.96px;font-size:16px;line-height:20px;letter-spacing:0px;color:#222;font-weight:400;">10</div>
<svg class="b" style="left:1347px;top:983px" width="13" height="8" viewBox="0 0 13 8"><path d="M1.5 1.5 L6.5 6.3 L11.5 1.5" fill="none" stroke="#343a40" stroke-width="1.6" stroke-linecap="round" stroke-linejoin="round"/></svg>
<div class="t" style="left:91.5px;top:1075.46px;font-size:16px;line-height:20px;letter-spacing:1.15px;color:#dedede;font-weight:400;">Copyright © My Company 2025 - version unknown (local build)</div>
<svg class="b" style="left:1367px;top:1078px" width="19" height="14" viewBox="0 0 19 14"><rect width="19" height="14" fill="#fff"/><rect x="0" y="0.000" width="19" height="1.077" fill="#b22234"/><rect x="0" y="2.154" width="19" height="1.077" fill="#b22234"/><rect x="0" y="4.308" width="19" height="1.077" fill="#b22234"/><rect x="0" y="6.462" width="19" height="1.077" fill="#b22234"/><rect x="0" y="8.615" width="19" height="1.077" fill="#b22234"/><rect x="0" y="10.769" width="19" height="1.077" fill="#b22234"/><rect x="0" y="12.923" width="19" height="1.077" fill="#b22234"/><rect width="10.7" height="7.5" fill="#2a3b72"/><circle cx="1.20" cy="1.00" r="0.35" fill="#cfd6ea"/><circle cx="3.30" cy="1.00" r="0.35" fill="#cfd6ea"/><circle cx="5.40" cy="1.00" r="0.35" fill="#cfd6ea"/><circle cx="7.50" cy="1.00" r="0.35" fill="#cfd6ea"/><circle cx="9.60" cy="1.00" r="0.35" fill="#cfd6ea"/><circle cx="2.25" cy="2.40" r="0.35" fill="#cfd6ea"/><circle cx="4.35" cy="2.40" r="0.35" fill="#cfd6ea"/><circle cx="6.45" cy="2.40" r="0.35" fill="#cfd6ea"/><circle cx="8.55" cy="2.40" r="0.35" fill="#cfd6ea"/><circle cx="1.20" cy="3.80" r="0.35" fill="#cfd6ea"/><circle cx="3.30" cy="3.80" r="0.35" fill="#cfd6ea"/><circle cx="5.40" cy="3.80" r="0.35" fill="#cfd6ea"/><circle cx="7.50" cy="3.80" r="0.35" fill="#cfd6ea"/><circle cx="9.60" cy="3.80" r="0.35" fill="#cfd6ea"/><circle cx="2.25" cy="5.20" r="0.35" fill="#cfd6ea"/><circle cx="4.35" cy="5.20" r="0.35" fill="#cfd6ea"/><circle cx="6.45" cy="5.20" r="0.35" fill="#cfd6ea"/><circle cx="8.55" cy="5.20" r="0.35" fill="#cfd6ea"/><circle cx="1.20" cy="6.60" r="0.35" fill="#cfd6ea"/><circle cx="3.30" cy="6.60" r="0.35" fill="#cfd6ea"/><circle cx="5.40" cy="6.60" r="0.35" fill="#cfd6ea"/><circle cx="7.50" cy="6.60" r="0.35" fill="#cfd6ea"/><circle cx="9.60" cy="6.60" r="0.35" fill="#cfd6ea"/></svg>
</body></html>
